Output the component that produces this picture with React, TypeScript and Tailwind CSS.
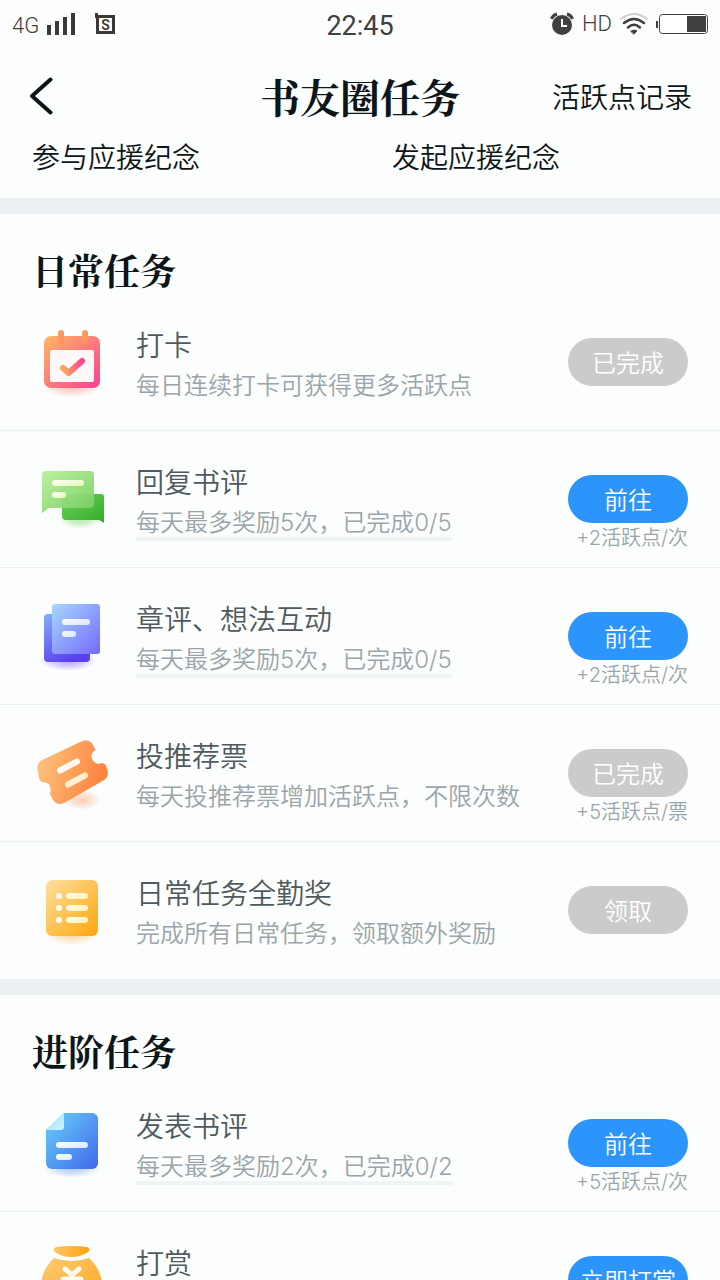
import type { ReactNode } from 'react';

type Task = {
  title: string;
  desc?: string;
  underline?: boolean;
  action: string;
  done?: boolean;
  reward?: string;
  icon: ReactNode;
};

/** Diagonal two-stop gradient shared by all task icons. */
function Grad({ id, from, to }: { id: string; from: string; to: string }) {
  return (
    <linearGradient id={id} x1="0" y1="0" x2="1" y2="1">
      <stop offset="0" stopColor={from} />
      <stop offset="1" stopColor={to} />
    </linearGradient>
  );
}

/** Soft coloured glow under an icon. */
function Glow({ id, color, cx = 40, cy = 65, rx = 28 }: { id: string; color: string; cx?: number; cy?: number; rx?: number }) {
  return (
    <>
      <radialGradient id={id}>
        <stop offset="0" stopColor={color} stopOpacity="0.6" />
        <stop offset="0.5" stopColor={color} stopOpacity="0.35" />
        <stop offset="1" stopColor={color} stopOpacity="0" />
      </radialGradient>
      <ellipse cx={cx} cy={cy} rx={rx} ry="10" fill={`url(#${id})`} />
    </>
  );
}

function TaskIcon({ children }: { children: ReactNode }) {
  return (
    <svg viewBox="0 0 80 80" className="mt-7 size-20 shrink-0" aria-hidden>
      {children}
    </svg>
  );
}

const calendarIcon = (
  <TaskIcon>
    <Grad id="cal" from="#fdb864" to="#fb3f93" />
    <Grad id="calPin" from="#fca45c" to="#fb8a68" />
    <linearGradient id="calTick" x1="0" y1="0.5" x2="1" y2="0.3">
      <stop offset="0" stopColor="#fba65f" />
      <stop offset="1" stopColor="#f8488f" />
    </linearGradient>
    <Glow id="calGlow" color="#fb9a7c" />
    <rect x="12" y="14" width="56" height="52" rx="7" fill="url(#cal)" />
    <rect x="18" y="28" width="44" height="32" rx="2" fill="#fff8f8" />
    <rect x="26" y="8" width="6" height="14" rx="3" fill="url(#calPin)" />
    <rect x="50" y="8" width="6" height="14" rx="3" fill="url(#calPin)" />
    <path d="M31 46l5.500 5L50 39" fill="none" stroke="url(#calTick)" strokeWidth="6" strokeLinecap="round" strokeLinejoin="round" />
  </TaskIcon>
);

const chatIcon = (
  <TaskIcon>
    <Grad id="chatBack" from="#6fcf5c" to="#2fae26" />
    <Grad id="chatFront" from="#b8f09a" to="#76cd62" />
    <Grad id="chatBar" from="#ffffff" to="#e2fcae" />
    <Glow id="chatGlow" color="#7fdb6c" cx={48} cy={60} rx={22} />
    <path d="M33 35h36a3 3 0 0 1 3 3v26l-5-3H34a4 4 0 0 1-4-4V38z" fill="url(#chatBack)" />
    <path d="M14 12h44a4 4 0 0 1 4 4v29a4 4 0 0 1-4 4H17l-7 5V16a4 4 0 0 1 4-4z" fill="url(#chatFront)" fillOpacity="0.95" />
    <rect x="20" y="21" width="32" height="6" rx="3" fill="url(#chatBar)" />
    <rect x="20" y="33" width="14" height="6" rx="3" fill="url(#chatBar)" />
  </TaskIcon>
);

const pagesIcon = (
  <TaskIcon>
    <linearGradient id="pagesBack" x1="0" y1="0" x2="0.5" y2="1">
      <stop offset="0" stopColor="#85adfa" />
      <stop offset="1" stopColor="#5a40ee" />
    </linearGradient>
    <Grad id="pagesFront" from="#a6d8fe" to="#7569fb" />
    <Grad id="pagesBar" from="#ffffff" to="#d9e2ff" />
    <Glow id="pagesGlow" color="#8a6cf5" cx={36} cy={65} />
    <rect x="12" y="18" width="46" height="48" rx="4" fill="url(#pagesBack)" />
    <rect x="20" y="8" width="48" height="50" rx="3" fill="url(#pagesFront)" />
    <rect x="30" y="23" width="28" height="6" rx="3" fill="url(#pagesBar)" />
    <rect x="30" y="35" width="14" height="6" rx="3" fill="url(#pagesBar)" />
  </TaskIcon>
);

const ticketIcon = (
  <TaskIcon>
    <linearGradient id="ticket" x1="0" y1="0.4" x2="1" y2="0.7">
      <stop offset="0" stopColor="#fdc27c" />
      <stop offset="1" stopColor="#fd7c38" />
    </linearGradient>
    <Grad id="ticketBar" from="#ffffff" to="#ffe9c4" />
    <Glow id="ticketGlow" color="#fdae82" cx={50} cy={67} rx={18} />
    <path
      d="M5.500 37Q4 30 10 27L48 9Q57 5 61 12l2.500 5A7 7 0 0 0 70 30q2 0 3.500 2l2 5Q77 44 72 47L34 69Q26 74 21 67l-3-6Q21 50 11 49q-3 0-4-4z"
      fill="url(#ticket)"
    />
    <path d="M28 37.500l17-9M36 51.500l17-9" stroke="url(#ticketBar)" strokeWidth="6" strokeLinecap="round" />
  </TaskIcon>
);

const listIcon = (
  <TaskIcon>
    <Grad id="list" from="#fde0a0" to="#fda60a" />
    <Grad id="listBar" from="#fffdf0" to="#fff0b0" />
    <Glow id="listGlow" color="#fdc46a" />
    <rect x="14" y="10" width="52" height="56" rx="6" fill="url(#list)" />
    {[26, 38, 50].map((y) => (
      <g key={y}>
        <circle cx="27" cy={y} r="3" fill="#fffdf0" />
        <rect x="34" y={y - 3} width="22" height="6" rx="3" fill="url(#listBar)" />
      </g>
    ))}
  </TaskIcon>
);

const noteIcon = (
  <TaskIcon>
    <Grad id="note" from="#66d2fb" to="#4167ea" />
    <Grad id="noteFold" from="#a8e4fb" to="#c9f3fd" />
    <Grad id="noteBar" from="#ffffff" to="#d6e6ff" />
    <Glow id="noteGlow" color="#7aa4f8" />
    <path d="M32 10h28a6 6 0 0 1 6 6v44a6 6 0 0 1-6 6H20a6 6 0 0 1-6-6V27z" fill="url(#note)" />
    <path d="M32 10v14a3 3 0 0 1-3 3H14z" fill="url(#noteFold)" />
    <rect x="24" y="39" width="32" height="6" rx="3" fill="url(#noteBar)" />
    <rect x="24" y="51" width="16" height="6" rx="3" fill="url(#noteBar)" />
  </TaskIcon>
);

const moneyIcon = (
  <TaskIcon>
    <Grad id="money" from="#fdcb74" to="#fda31a" />
    <linearGradient id="moneyTop" x1="0" y1="0" x2="1" y2="0">
      <stop offset="0" stopColor="#fdc766" />
      <stop offset="1" stopColor="#fda30e" />
    </linearGradient>
    <path d="M24 7q16-2 31 0 4 2 1 5-7 5-17 5T23 12q-3-3 1-5z" fill="url(#moneyTop)" />
    <path d="M22 18q17 6 35 0 13 12 13 29 0 22-31 22T9 47q0-17 13-29z" fill="url(#money)" />
    <path d="M33 29l7 6 7-6M31 39h18M31 48h18M40 37v20" fill="none" stroke="#fffaf0" strokeWidth="5" strokeLinecap="round" />
  </TaskIcon>
);

const dailyTasks: Task[] = [
  { title: '打卡', desc: '每日连续打卡可获得更多活跃点', action: '已完成', done: true, icon: calendarIcon },
  { title: '回复书评', desc: '每天最多奖励5次，已完成0/5', underline: true, action: '前往', reward: '+2活跃点/次', icon: chatIcon },
  { title: '章评、想法互动', desc: '每天最多奖励5次，已完成0/5', underline: true, action: '前往', reward: '+2活跃点/次', icon: pagesIcon },
  { title: '投推荐票', desc: '每天投推荐票增加活跃点，不限次数', action: '已完成', done: true, reward: '+5活跃点/票', icon: ticketIcon },
  { title: '日常任务全勤奖', desc: '完成所有日常任务，领取额外奖励', action: '领取', done: true, icon: listIcon },
];

const advancedTasks: Task[] = [
  { title: '发表书评', desc: '每天最多奖励2次，已完成0/2', underline: true, action: '前往', reward: '+5活跃点/次', icon: noteIcon },
  { title: '打赏', action: '立即打赏', icon: moneyIcon },
];

function StatusBar() {
  return (
    <div className="mb-1 grid h-12 shrink-0 grid-cols-3 items-center px-3 font-['Roboto','Noto_Sans_CJK_SC',sans-serif] text-[#404040]">
      <div className="flex items-center gap-2">
        <span className="pt-1 text-[22px] leading-7">4G</span>
        <svg viewBox="0 0 28 24" className="h-6 w-7" fill="#3c3838" aria-hidden>
          <path d="M0 13h4v10H0zM8 9h4v14H8zM16 5h4v18h-4zM24 1h4v22h-4z" />
        </svg>
        <svg viewBox="0 0 20 22" className="ml-3 h-[22px] w-5" aria-hidden>
          <path d="M0 2h20v19H1V5H0zM4 5v13h13V5z" fill="#3c3838" fillRule="evenodd" />
          <path d="M0 0h3v3H0z" fill="#3c3838" />
          <text x="10.500" y="16.500" textAnchor="middle" fontSize="14" fontWeight="600" fill="#3c3838">S</text>
        </svg>
      </div>
      <span className="pt-1 text-center text-[27px] leading-8 font-normal">22:45</span>
      <div className="flex items-center justify-end gap-2">
        <svg viewBox="0 0 24 24" className="size-6" aria-hidden>
          <circle cx="12" cy="13" r="10" fill="#404040" />
          <path d="M1.500 7Q3 3 7 2M22.500 7Q21 3 17 2" fill="none" stroke="#404040" strokeWidth="3" />
          <path d="M12 7v7h5" fill="none" stroke="#fff" strokeWidth="2" />
        </svg>
        <span className="text-[22px] leading-7">HD</span>
        <svg viewBox="0 0 28 22" className="h-[22px] w-7" fill="none" strokeLinecap="round" aria-hidden>
          <path d="M1 6Q14-4 27 6" stroke="#cfcfcf" strokeWidth="2" />
          <path d="M4 10Q14 2 24 10M8 14.500Q14 9 20 14.500" stroke="#404040" strokeWidth="2.500" />
          <path d="M11 18q3-2 6 0l-3 3z" fill="#404040" stroke="#404040" />
        </svg>
        <svg viewBox="0 0 52 20" className="h-5 w-[52px]" aria-hidden>
          <path d="M1 7v7" stroke="#404040" strokeWidth="2" />
          <rect x="3.500" y="0.500" width="48" height="19" rx="3" fill="#fff" stroke="#404040" />
          <rect x="31" y="2" width="19" height="16" fill="#404040" />
        </svg>
      </div>
    </div>
  );
}

function TaskRow({ task }: { task: Task }) {
  return (
    <li className="flex h-[137px] border-b border-[#e8edef] px-8 last:border-b-0">
      {task.icon}
      <div className="ml-6 min-w-0 flex-1 pt-8 font-['Inter','Noto_Sans_CJK_SC',sans-serif]">
        <h3 className="text-[28px] leading-10 text-[#4f5a60]">{task.title}</h3>
        {task.desc && (
          <p className="text-2xl leading-10 whitespace-nowrap text-[#99a5ab]">
            {task.underline ? (
              <span className="border-b-4 border-[#eff4f6]">{task.desc}</span>
            ) : (
              task.desc
            )}
          </p>
        )}
      </div>
      <div className="flex shrink-0 flex-col items-end pt-11">
        <button
          type="button"
          disabled={task.done}
          className="h-12 w-[120px] rounded-full bg-[#2b95fb] text-2xl whitespace-nowrap text-white disabled:bg-[#cbcbcb]"
        >
          {task.action}
        </button>
        {task.reward && (
          <span className="font-['Inter','Noto_Sans_CJK_SC',sans-serif] text-xl leading-[30px] text-[#99a5ab]">
            {task.reward}
          </span>
        )}
      </div>
    </li>
  );
}

function TaskSection({ title, tasks }: { title: string; tasks: Task[] }) {
  return (
    <section className="border-t-16 border-[#ebf0f3]">
      <h2 className="h-20 px-8 pt-8 font-['Noto_Serif_CJK_SC','Source_Han_Serif_SC','Liberation_Serif','Noto_Sans_CJK_SC',serif] text-4xl leading-[48px] font-bold text-[#0c1518]">
        {title}
      </h2>
      <ul>
        {tasks.map((task) => (
          <TaskRow key={task.title} task={task} />
        ))}
      </ul>
    </section>
  );
}

export default function App() {
  return (
    <div className="flex h-screen flex-col overflow-hidden bg-[#fcfdfd] font-['Noto_Sans_CJK_SC',sans-serif] font-[350]">
      <StatusBar />
      <header className="grid h-[88px] shrink-0 grid-cols-[1fr_auto_1fr] items-center px-7 text-[#0c1518]">
        <button type="button" aria-label="返回" className="justify-self-start">
          <svg viewBox="0 0 26 38" className="h-[38px] w-[26px]" fill="none" aria-hidden>
            <path d="M22.500 2.500L4 19l18.500 16.500" stroke="#0c1518" strokeWidth="4" strokeLinecap="round" strokeLinejoin="round" />
          </svg>
        </button>
        <h1 className="font-['Noto_Serif_CJK_SC','Source_Han_Serif_SC','Liberation_Serif','Noto_Sans_CJK_SC',serif] text-[40px] leading-[56px] font-bold">
          书友圈任务
        </h1>
        <a href="#records" className="justify-self-end text-[28px] leading-10">
          活跃点记录
        </a>
      </header>
      <main className="min-h-0 flex-1 overflow-y-auto [scrollbar-width:none]">
        <div className="grid h-[58px] grid-cols-2 text-[28px] leading-8 text-[#0c1518]">
          <span className="pl-8">参与应援纪念</span>
          <span className="pl-8">发起应援纪念</span>
        </div>
        <TaskSection title="日常任务" tasks={dailyTasks} />
        <TaskSection title="进阶任务" tasks={advancedTasks} />
      </main>
    </div>
  );
}
